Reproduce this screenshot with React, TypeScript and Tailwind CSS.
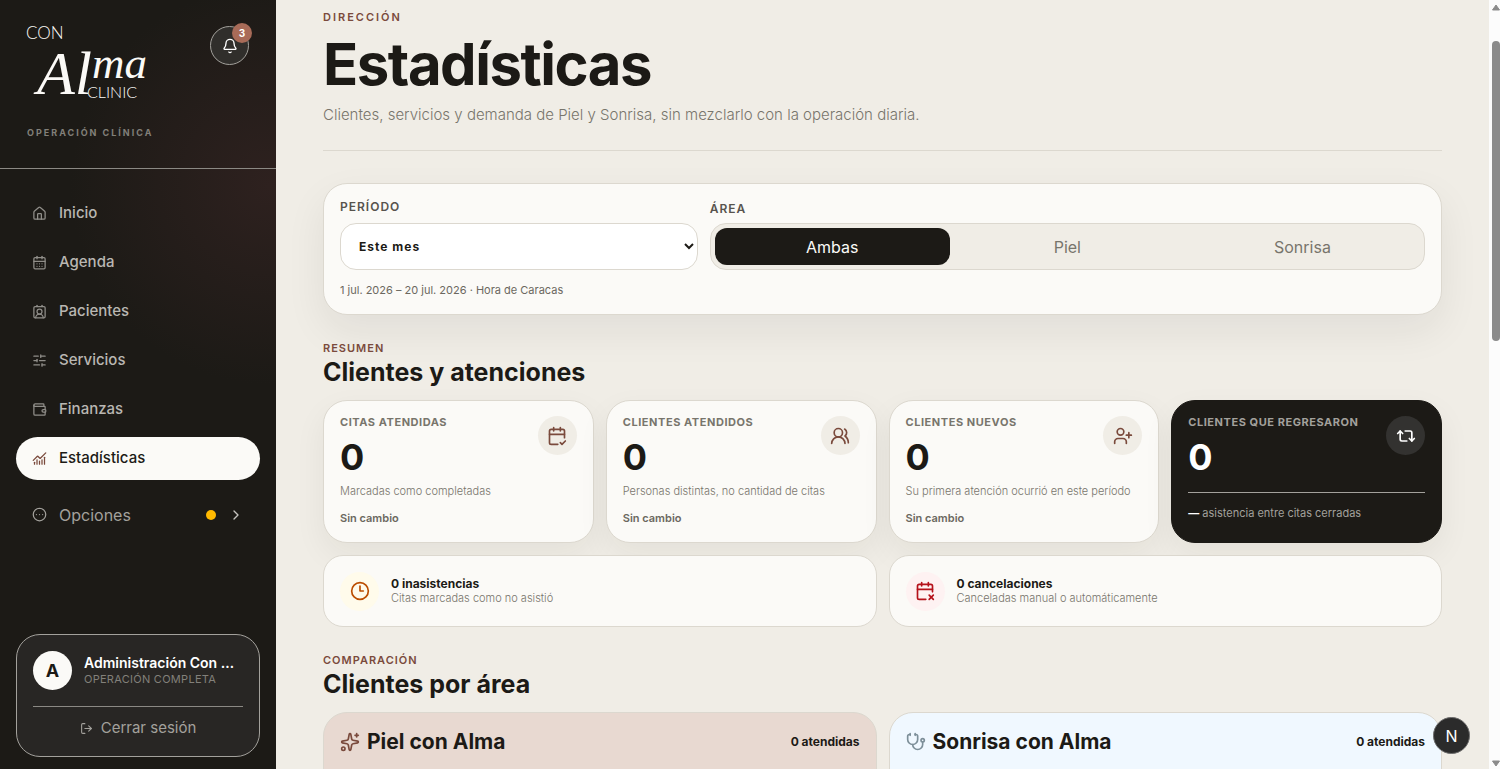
import React, { useState } from 'react'
import {
  Bell,
  CalendarCheck2,
  CalendarDays,
  CalendarX2,
  ChartNoAxesCombined,
  ChevronRight,
  CircleEllipsis,
  Clock3,
  ContactRound,
  House,
  LogOut,
  Repeat2,
  SlidersHorizontal,
  Sparkles,
  Stethoscope,
  UserPlus,
  UsersRound,
  Wallet,
} from 'lucide-react'

const navItems = [
  { label: 'Inicio', icon: House },
  { label: 'Agenda', icon: CalendarDays },
  { label: 'Pacientes', icon: ContactRound },
  { label: 'Servicios', icon: SlidersHorizontal },
  { label: 'Finanzas', icon: Wallet },
  { label: 'Estadísticas', icon: ChartNoAxesCombined, active: true },
]

const stats = [
  { title: 'CITAS ATENDIDAS', value: 0, note: 'Marcadas como completadas', icon: CalendarCheck2 },
  { title: 'CLIENTES ATENDIDOS', value: 0, note: 'Personas distintas, no cantidad de citas', icon: UsersRound },
  { title: 'CLIENTES NUEVOS', value: 0, note: 'Su primera atención ocurrió en este período', icon: UserPlus },
]

const areas = ['Ambas', 'Piel', 'Sonrisa']

function Logo() {
  return (
    <svg width="130" height="84" viewBox="0 0 130 84" fill="#fbfaf7" className="overflow-visible" role="img" aria-label="Con Alma Clinic">
      <text x="-1" y="15" fontFamily="Lato, sans-serif" fontWeight="300" fontSize="17">CON</text>
      <text x="10" y="70" fontFamily="'Liberation Serif', serif" fontStyle="italic" fontSize="62">
        Al<tspan y="54" fontSize="45">ma</tspan>
      </text>
      <text x="60" y="74" fontFamily="Lato, sans-serif" fontWeight="300" fontSize="16">CLINIC</text>
    </svg>
  )
}

function Sidebar() {
  return (
    <aside className="flex w-[276px] shrink-0 flex-col bg-[#1c1a16] bg-[radial-gradient(circle_at_270px_185px,#2e211f_0px,#1c1a16_200px)]">
      <div className="flex h-[169px] flex-col justify-between border-b border-[#8b8984] px-[27px] pt-6 pb-[27px]">
        <div className="flex items-start justify-between">
          <Logo />
          <button
            aria-label="Notificaciones"
            className="relative mt-[2px] flex size-[39px] items-center justify-center rounded-full border border-[#a3a19c] bg-[#302e2b] text-white"
          >
            <Bell size={16} strokeWidth={2} />
            <span className="absolute -top-1 -right-1 flex size-5 items-center justify-center rounded-full bg-[#a86b58] text-[10px] font-bold">
              3
            </span>
          </button>
        </div>
        <p className="text-[9px] leading-4 font-bold tracking-[2px] text-[#82807a]">OPERACIÓN CLÍNICA</p>
      </div>

      <nav className="flex flex-1 flex-col gap-[6px] px-4 pt-[23px]">
        {navItems.map(({ label, icon: Icon, active }) => (
          <a
            key={label}
            href="#"
            className={
              active
                ? 'flex h-[43px] items-center gap-3 rounded-full bg-[#fbfaf7] px-4 text-[15px] font-medium text-[#1c1a16]'
                : 'flex h-[43px] items-center gap-3 rounded-full px-4 text-[15px] font-medium text-[#b9b7b2]'
            }
          >
            <Icon size={15} strokeWidth={2} className={active ? 'text-[#7a4a3c]' : 'text-[#908e89]'} />
            {label}
          </a>
        ))}
        <button className="mt-[6px] flex h-[45px] items-center gap-3 px-4 text-left text-base text-[#a3a19c]">
          <CircleEllipsis size={15} strokeWidth={2} />
          <span className="flex-1">Opciones</span>
          <span className="size-[10px] rounded-full bg-[#ffb900]" />
          <ChevronRight size={16} strokeWidth={2} className="text-[#c6c4bf]" />
        </button>
      </nav>

      <div className="mx-4 mb-3 rounded-3xl border border-[#a3a19c] bg-[#282624] px-4 pt-4 pb-[14px]">
        <div className="flex items-center gap-3 border-b border-[#8b8984] pb-4">
          <span className="flex size-[39px] shrink-0 items-center justify-center rounded-full bg-[#fbfaf7] text-lg font-bold text-[#1c1a16]">
            A
          </span>
          <div className="min-w-0">
            <p className="truncate text-sm leading-4 font-semibold text-white">Administración Con Alma</p>
            <p className="text-[11px] leading-4 tracking-wide text-[#82807a]">OPERACIÓN COMPLETA</p>
          </div>
        </div>
        <button className="flex h-[35px] w-full items-center justify-center gap-2 pt-2 text-[15px] text-[#a3a19c]">
          <LogOut size={13} strokeWidth={2} />
          Cerrar sesión
        </button>
      </div>
    </aside>
  )
}

function SectionTitle({ eyebrow, title }: { eyebrow: string; title: string }) {
  return (
    <div className="mb-3">
      <p className="text-[11px] leading-4 font-semibold tracking-[1px] text-[#7a4a3c]">{eyebrow}</p>
      <h2 className="text-[25px] leading-8 font-bold">{title}</h2>
    </div>
  )
}

function Filters() {
  const [area, setArea] = useState('Ambas')
  return (
    <section className="mb-[25px] rounded-3xl border border-[#dcd8cf] bg-[#fbfaf7] px-4 pt-[15px] pb-4 shadow-[0_16px_40px_rgba(28,26,22,0.07)]">
      <div className="grid grid-cols-[1fr_2fr] gap-3">
        <div>
          <label htmlFor="periodo" className="block h-6 text-xs leading-4 font-semibold tracking-[1px] text-[#57534d]">
            PERÍODO
          </label>
          <select
            id="periodo"
            className="h-[47px] w-full rounded-2xl border border-[#dcd8cf] bg-white pl-[14px] text-xs font-bold tracking-[1px] text-[#1c1a16]"
          >
            <option>Este mes</option>
          </select>
        </div>
        <fieldset>
          <legend className="h-6 pt-[2px] text-xs leading-4 font-semibold tracking-[1px] text-[#57534d]">ÁREA</legend>
          <div className="grid h-[47px] grid-cols-3 rounded-2xl border border-[#dcd8cf] bg-[#f0ede6] p-1">
            {areas.map((a) => (
              <button
                key={a}
                type="button"
                aria-pressed={a === area}
                onClick={() => setArea(a)}
                className={
                  a === area
                    ? 'rounded-xl bg-[#1c1a16] text-base text-[#fbfaf7]'
                    : 'rounded-xl text-base text-[#78756c]'
                }
              >
                {a}
              </button>
            ))}
          </div>
        </fieldset>
      </div>
      <p className="mt-3 text-[11px] leading-4 text-[#6b6860]">1 jul. 2026 – 20 jul. 2026 · Hora de Caracas</p>
    </section>
  )
}

function StatCard({ title, value, note, icon: Icon }) {
  return (
    <article className="flex h-[143px] justify-between rounded-3xl border border-[#dcd8cf] bg-[#fbfaf7] px-4 pt-[13px] shadow-[0_12px_32px_rgba(28,26,22,0.06)]">
      <div className="min-w-0 whitespace-nowrap">
        <p className="text-[11px] leading-4 font-bold tracking-wider text-[#78756c]">{title}</p>
        <p className="mt-[7px] text-4xl leading-10 font-bold">{value}</p>
        <p className="mt-[6px] text-[11px] leading-4 font-light text-[#78756c]">{note}</p>
        <p className="mt-[11px] text-[11px] leading-4 font-semibold text-[#6b6860]">Sin cambio</p>
      </div>
      <span className="mt-[2px] -ml-10 flex size-[39px] shrink-0 items-center justify-center rounded-full bg-[#f0ede6] text-[#7a4a3c]">
        <Icon size={20} strokeWidth={2} />
      </span>
    </article>
  )
}

function ReturningCard() {
  return (
    <article className="h-[143px] rounded-3xl border border-[#1c1a16] bg-[#1c1a16] px-4 pt-[13px] shadow-[0_12px_32px_rgba(28,26,22,0.06)]">
      <div className="flex h-[79px] justify-between border-b border-[#a3a19c]">
        <div className="whitespace-nowrap">
          <p className="text-[11px] leading-4 font-bold tracking-wider text-[#a3a19c]">CLIENTES QUE REGRESARON</p>
          <p className="mt-[7px] text-4xl leading-10 font-bold text-white">0</p>
        </div>
        <span className="mt-[2px] flex size-[39px] shrink-0 items-center justify-center rounded-full bg-[#333230] text-white">
          <Repeat2 size={20} strokeWidth={2} />
        </span>
      </div>
      <p className="mt-3 text-[11px] leading-4 text-[#a3a19c]">
        <strong className="text-white">—</strong> asistencia entre citas cerradas
      </p>
    </article>
  )
}

function IncidentCard({ title, note, icon: Icon, tone }) {
  return (
    <article className="flex h-[72px] items-center gap-3 rounded-[20px] border border-[#dcd8cf] bg-[#fbfaf7] px-4">
      <span className={`flex size-[39px] items-center justify-center rounded-full ${tone}`}>
        <Icon size={20} strokeWidth={2} />
      </span>
      <div>
        <p className="text-xs leading-[15px] font-bold">{title}</p>
        <p className="text-[11px] leading-[15px] font-light text-[#78756c]">{note}</p>
      </div>
    </article>
  )
}

function AreaCard({ title, icon: Icon, tone, iconTone }) {
  return (
    <article className={`h-60 rounded-3xl border border-[#dcd8cf] px-4 pt-[14px] ${tone}`}>
      <div className="flex items-center gap-[7px]">
        <Icon size={20} strokeWidth={2} className={iconTone} />
        <h3 className="flex-1 text-[21px] leading-[30px] font-bold">{title}</h3>
        <p className="text-xs font-bold">0 atendidas</p>
      </div>
    </article>
  )
}

function ScrollRail() {
  return (
    <div aria-hidden="true" className="flex w-[11px] shrink-0 flex-col items-end justify-between bg-[#fcfcfc] pb-[1px]">
      <svg width="9" height="40" viewBox="0 0 9 40">
        <path d="M1.5 10 L5 5 L8.5 10 Z" fill="#8b8b8b" stroke="#8b8b8b" strokeLinejoin="round" />
      </svg>
      <div className="mt-[1px] mb-auto h-[39%] w-2 rounded-full bg-[#8b8b8b]" />
      <svg width="9" height="10" viewBox="0 0 9 10">
        <path d="M1.5 3 L5 8 L8.5 3 Z" fill="#8b8b8b" stroke="#8b8b8b" strokeLinejoin="round" />
      </svg>
    </div>
  )
}

export default function App() {
  return (
    <div className="flex h-screen overflow-hidden bg-[#f0ede6] font-[Inter,sans-serif] text-[#1c1a16]">
      <Sidebar />
      <main className="min-w-0 flex-1 overflow-y-auto px-[47px] pt-[9px] [scrollbar-width:none]">
        <header className="mb-8 border-b border-[#dcd8cf] pb-[21px]">
          <p className="text-[11px] leading-4 font-semibold tracking-[2px] text-[#7a4a3c]">DIRECCIÓN</p>
          <h1 className="mt-[7px] text-[58px] leading-[64px] font-bold tracking-tight">Estadísticas</h1>
          <p className="mt-[5px] text-[15px] leading-7 font-light text-[#78756c]">
            Clientes, servicios y demanda de Piel y Sonrisa, sin mezclarlo con la operación diaria.
          </p>
        </header>

        <Filters />

        <SectionTitle eyebrow="RESUMEN" title="Clientes y atenciones" />
        <div className="grid grid-cols-4 gap-3">
          {stats.map((stat) => (
            <StatCard key={stat.title} {...stat} />
          ))}
          <ReturningCard />
        </div>
        <div className="mt-3 mb-[25px] grid grid-cols-2 gap-3">
          <IncidentCard title="0 inasistencias" note="Citas marcadas como no asistió" icon={Clock3} tone="bg-[#fffbeb] text-[#bb4d00]" />
          <IncidentCard title="0 cancelaciones" note="Canceladas manual o automáticamente" icon={CalendarX2} tone="bg-[#fef2f2] text-[#b5121b]" />
        </div>

        <SectionTitle eyebrow="COMPARACIÓN" title="Clientes por área" />
        <div className="grid grid-cols-2 gap-3">
          <AreaCard title="Piel con Alma" icon={Sparkles} tone="bg-[#e8d9d1]" iconTone="text-[#7a4a3c]" />
          <AreaCard title="Sonrisa con Alma" icon={Stethoscope} tone="bg-[#f0f8ff]" iconTone="text-[#7d8f99]" />
        </div>
      </main>
      <ScrollRail />
      <button
        aria-label="Next.js"
        className="fixed right-[30px] bottom-[15px] flex size-[37px] items-center justify-center rounded-full border border-[#6b6b6b] bg-[#2b2b2b] text-base text-white"
      >
        N
      </button>
    </div>
  )
}
